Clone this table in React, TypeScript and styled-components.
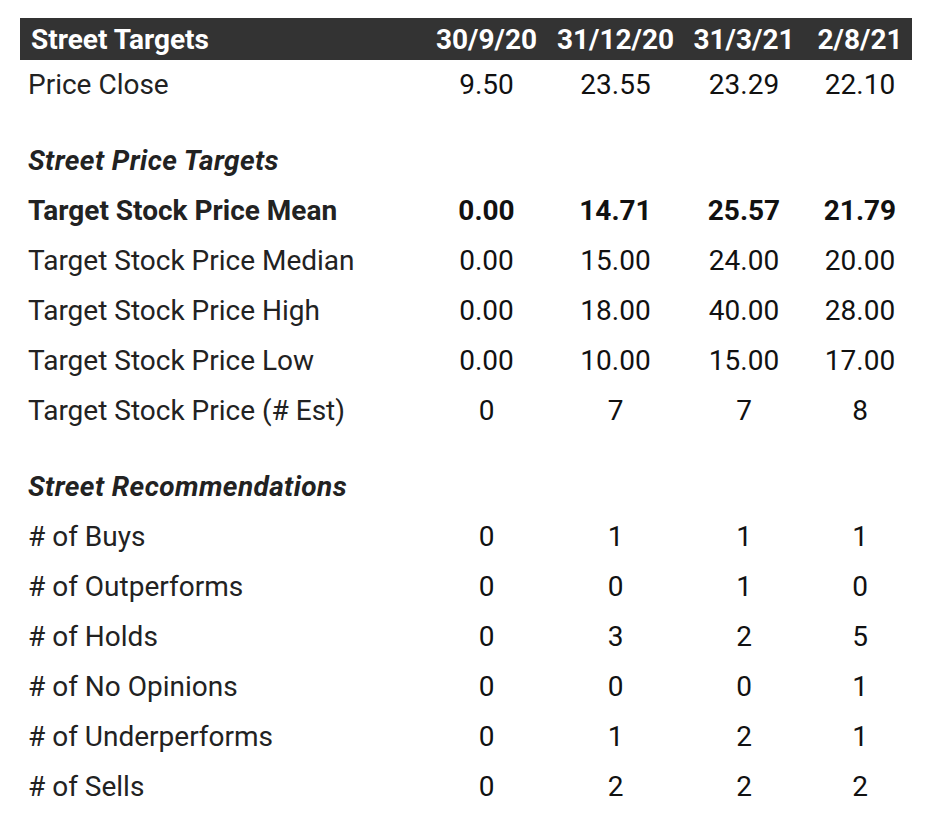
import React from "react";
import styled, { createGlobalStyle } from "styled-components";

const Global = createGlobalStyle`
  html, body { margin: 0; padding: 0; background: #fff; }
  body { font-family: Roboto, "Noto Sans", sans-serif; }
`;

const Page = styled.div`
  padding: 18px 20px 0 20px;
`;

const Table = styled.div`
  display: grid;
  grid-template-columns: 402px 129px 129px 128px 104px;
  width: 892px;
`;

const HeadCell = styled.div<{ $first?: boolean }>`
  background: #333333;
  color: #fff;
  font-weight: 700;
  font-size: 28px;
  height: 42px;
  display: flex;
  align-items: center;
  justify-content: ${(p) => (p.$first ? "flex-start" : "center")};
  padding-left: ${(p) => (p.$first ? "11px" : "0")};
  white-space: nowrap;
`;

const Cell = styled.div<{ $first?: boolean; $bold?: boolean }>`
  height: 50px;
  padding-bottom: 2px;
  box-sizing: border-box;
  display: flex;
  align-items: center;
  justify-content: ${(p) => (p.$first ? "flex-start" : "center")};
  padding-left: ${(p) => (p.$first ? "8px" : "0")};
  font-size: 28px;
  font-weight: ${(p) => (p.$bold ? 700 : 400)};
  color: ${(p) => (p.$first ? "#222" : "#111")};
  white-space: nowrap;
`;

const Spacer = styled.div`
  grid-column: 1 / -1;
  height: 26px;
`;

const Section = styled.div`
  grid-column: 1 / -1;
  height: 50px;
  padding-bottom: 2px;
  box-sizing: border-box;
  display: flex;
  align-items: center;
  padding-left: 8px;
  font-size: 28px;
  font-weight: 700;
  font-style: italic;
  letter-spacing: 0.4px;
  color: #222;
`;

type Row = { label: string; vals: string[]; bold?: boolean };

const priceTargets: Row[] = [
  { label: "Target Stock Price Mean", vals: ["0.00", "14.71", "25.57", "21.79"], bold: true },
  { label: "Target Stock Price Median", vals: ["0.00", "15.00", "24.00", "20.00"] },
  { label: "Target Stock Price High", vals: ["0.00", "18.00", "40.00", "28.00"] },
  { label: "Target Stock Price Low", vals: ["0.00", "10.00", "15.00", "17.00"] },
  { label: "Target Stock Price (# Est)", vals: ["0", "7", "7", "8"] },
];

const recs: Row[] = [
  { label: "# of Buys", vals: ["0", "1", "1", "1"] },
  { label: "# of Outperforms", vals: ["0", "0", "1", "0"] },
  { label: "# of Holds", vals: ["0", "3", "2", "5"] },
  { label: "# of No Opinions", vals: ["0", "0", "0", "1"] },
  { label: "# of Underperforms", vals: ["0", "1", "2", "1"] },
  { label: "# of Sells", vals: ["0", "2", "2", "2"] },
];

const renderRow = (r: Row) => (
  <React.Fragment key={r.label}>
    <Cell $first $bold={r.bold}>{r.label}</Cell>
    {r.vals.map((v, i) => (
      <Cell key={i} $bold={r.bold}>{v}</Cell>
    ))}
  </React.Fragment>
);

export default function App() {
  return (
    <Page>
      <Global />
      <Table>
        <HeadCell $first>Street Targets</HeadCell>
        <HeadCell>30/9/20</HeadCell>
        <HeadCell>31/12/20</HeadCell>
        <HeadCell>31/3/21</HeadCell>
        <HeadCell>2/8/21</HeadCell>
        {renderRow({ label: "Price Close", vals: ["9.50", "23.55", "23.29", "22.10"] })}
        <Spacer />
        <Section>Street Price Targets</Section>
        {priceTargets.map(renderRow)}
        <Spacer />
        <Section>Street Recommendations</Section>
        {recs.map(renderRow)}
      </Table>
    </Page>
  );
}
